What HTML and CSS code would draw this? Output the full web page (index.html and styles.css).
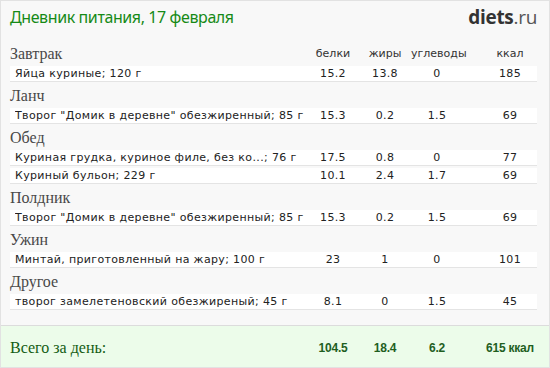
FILE: index.html
```html
<!DOCTYPE html>
<html lang="ru">
<head>
<meta charset="utf-8">
<title>Дневник питания</title>
<link rel="stylesheet" href="styles.css">
</head>
<body>
<div class="page">
  <div class="top">
    <h1 class="title">Дневник питания, 17 февраля</h1>
    <div class="logo"><b>diets</b>.ru</div>
  </div>
  <div class="diary">
    <div class="meal">
      <div class="meal-head">
        <span class="meal-name">Завтрак</span>
        <span class="col">белки</span><span class="col">жиры</span><span class="col">углеводы</span><span class="col kcal">ккал</span>
      </div>
      <div class="item"><span class="name">Яйца куриные; 120 г</span><span class="col">15.2</span><span class="col">13.8</span><span class="col">0</span><span class="col kcal">185</span></div>
    </div>
    <div class="meal">
      <div class="meal-head"><span class="meal-name">Ланч</span></div>
      <div class="item"><span class="name">Творог "Домик в деревне" обезжиренный; 85 г</span><span class="col">15.3</span><span class="col">0.2</span><span class="col">1.5</span><span class="col kcal">69</span></div>
    </div>
    <div class="meal">
      <div class="meal-head"><span class="meal-name">Обед</span></div>
      <div class="item"><span class="name">Куриная грудка, куриное филе, без ко...; 76 г</span><span class="col">17.5</span><span class="col">0.8</span><span class="col">0</span><span class="col kcal">77</span></div>
      <div class="item"><span class="name">Куриный бульон; 229 г</span><span class="col">10.1</span><span class="col">2.4</span><span class="col">1.7</span><span class="col kcal">69</span></div>
    </div>
    <div class="meal">
      <div class="meal-head"><span class="meal-name">Полдник</span></div>
      <div class="item"><span class="name">Творог "Домик в деревне" обезжиренный; 85 г</span><span class="col">15.3</span><span class="col">0.2</span><span class="col">1.5</span><span class="col kcal">69</span></div>
    </div>
    <div class="meal">
      <div class="meal-head"><span class="meal-name">Ужин</span></div>
      <div class="item"><span class="name">Минтай, приготовленный на жару; 100 г</span><span class="col">23</span><span class="col">1</span><span class="col">0</span><span class="col kcal">101</span></div>
    </div>
    <div class="meal">
      <div class="meal-head"><span class="meal-name">Другое</span></div>
      <div class="item"><span class="name">творог замелетеновский обезжиреный; 45 г</span><span class="col">8.1</span><span class="col">0</span><span class="col">1.5</span><span class="col kcal">45</span></div>
    </div>
  </div>
  <div class="total">
    <span class="total-label">Всего за день:</span>
    <span class="col">104.5</span><span class="col">18.4</span><span class="col">6.2</span><span class="col kcal">615 ккал</span>
  </div>
</div>
</body>
</html>
```
FILE: styles.css
```css
html, body {
  margin: 0;
  padding: 0;
}
.page {
  width: 550px;
  height: 368px;
  box-sizing: border-box;
  border: 1px solid #e2e2e2;
  background: #f8f8f8;
  display: flex;
  flex-direction: column;
  overflow: hidden;
}
.top {
  height: 41px;
  display: flex;
  justify-content: space-between;
  align-items: flex-start;
  padding: 0 12px 0 9px;
}
.title {
  margin: 5px 0 0;
  font: normal 16px/22px "Noto Sans", "DejaVu Sans", sans-serif;
  letter-spacing: -0.4px;
  color: #168a16;
}
.logo {
  margin-top: 4px;
  font: 19px/24px "Open Sans", "DejaVu Sans", sans-serif;
  color: #555;
  letter-spacing: -0.3px;
}
.logo b {
  font-weight: 700;
  color: #333;
}
.diary {
  flex: 1;
  padding: 0 12px 0 9px;
}
.meal-head {
  display: flex;
  align-items: flex-end;
  height: 24px;
  box-sizing: border-box;
  padding-bottom: 3px;
}
.meal-name {
  flex: 1;
  font: 16px/18px "Liberation Serif", "Times New Roman", serif;
  color: #484848;
}
.meal-head .col {
  font: 11px/14px "DejaVu Sans", Verdana, sans-serif;
  color: #333;
  padding-bottom: 2px;
}
.col {
  width: 52px;
  text-align: center;
  flex: none;
}
.col.kcal {
  width: 54px;
  margin-left: 20px;
}
.item {
  display: flex;
  align-items: center;
  height: 15px;
  background: #fff;
  border-bottom: 1px solid #e4e4e4;
  margin-bottom: 2px;
  padding-left: 5px;
  font: 11px/15px "DejaVu Sans", Verdana, sans-serif;
  letter-spacing: 0.35px;
  color: #222;
}
.item .name {
  flex: 1;
  white-space: nowrap;
  overflow: hidden;
}
.total {
  height: 42px;
  flex: none;
  display: flex;
  align-items: center;
  background: #ecfcea;
  border-top: 1px solid #dcdcdc;
  padding: 2px 12px 0 9px;
  box-sizing: border-box;
}
.total-label {
  flex: 1;
  font: 16px/18px "Liberation Serif", "Times New Roman", serif;
  color: #135c13;
}
.total .col {
  font: bold 12px/16px "Liberation Sans", Arial, sans-serif;
  letter-spacing: -0.2px;
  color: #1f5f1f;
}
```
